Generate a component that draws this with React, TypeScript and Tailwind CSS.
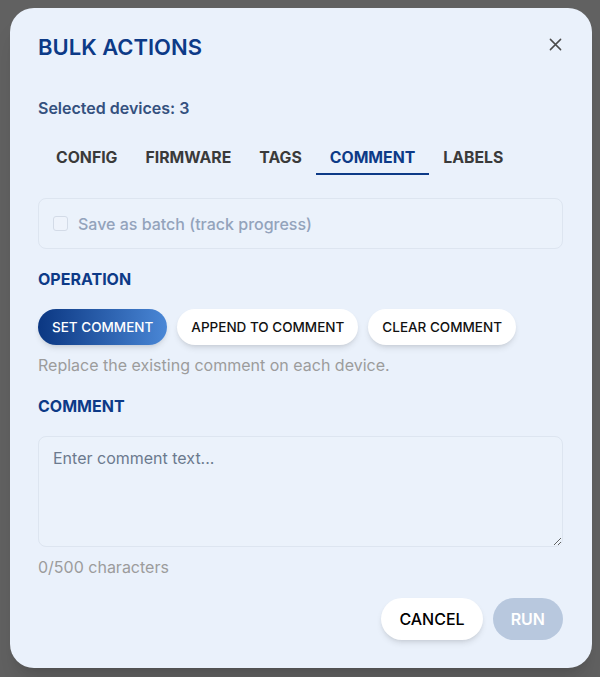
import React from "react";

export default function App() {
  const tabs = ["CONFIG", "FIRMWARE", "TAGS", "COMMENT", "LABELS"];
  return (
    <div
      className="relative h-[677px] w-[600px] overflow-hidden bg-[#616161] pl-[10px] pt-[8px]"
      style={{ fontFamily: "Inter, 'Noto Sans', sans-serif" }}
    >
      <div className="relative h-[660px] w-[582px] rounded-[24px] bg-[#eaf1fb] pl-[28px] pr-[29px] pt-[25px] shadow-xl">
        <button className="absolute right-[21px] top-[20px] flex h-[32px] w-[32px] items-center justify-center text-[#4a4a4a]">
          <svg width="13" height="13" viewBox="0 0 14 14" fill="none" stroke="currentColor" strokeWidth="1.6" strokeLinecap="round">
            <path d="M1.5 1.5L12.5 12.5M12.5 1.5L1.5 12.5" />
          </svg>
        </button>

        <h1 className="text-[22px] font-semibold leading-[28px] text-[#0d3a87]">BULK ACTIONS</h1>

        <div className="mt-[37px] text-[16px] font-semibold leading-[20px] text-[#34507e]">Selected devices: 3</div>

        <div className="ml-[4px] mt-[23px] flex">
          {tabs.map((t) => (
            <div
              key={t}
              className={
                t === "COMMENT"
                  ? "flex h-[34px] items-center border-b-2 border-[#0d3a87] px-[14px] pt-[1px] text-[15.8px] font-bold text-[#0d3a87]"
                  : "flex h-[34px] items-center border-b-2 border-transparent px-[14px] pt-[1px] text-[15.8px] font-bold text-[#3a3a3a]"
              }
            >
              {t}
            </div>
          ))}
        </div>

        <div className="mt-[23px] flex h-[51px] items-center gap-[10px] rounded-[8px] border border-[#dde5f0] bg-[#ebf2fb] px-[14px]">
          <div className="h-[15px] w-[15px] rounded-[3px] border border-[#d3dbe7] bg-[#eef3fb]" />
          <span className="text-[16px] font-medium text-[#93a3bb]">Save as batch (track progress)</span>
        </div>

        <div className="mt-[18px] text-[16px] font-bold leading-[24px] text-[#0d3a87]">OPERATION</div>

        <div className="mt-[18px] flex gap-[10px]">
          <button className="h-[36px] rounded-full bg-gradient-to-r from-[#0b3782] to-[#4a87d6] px-[14px] text-[13.5px] font-medium text-white shadow-md">
            SET COMMENT
          </button>
          <button className="h-[36px] rounded-full bg-white px-[14px] text-[13.5px] font-medium text-[#111] shadow-md">
            APPEND TO COMMENT
          </button>
          <button className="h-[36px] rounded-full bg-white px-[14px] text-[13.5px] font-medium text-[#111] shadow-md">
            CLEAR COMMENT
          </button>
        </div>

        <div className="mt-[8px] text-[16px] leading-[24px] text-[#9c9c9c]">Replace the existing comment on each device.</div>

        <div className="mt-[17px] text-[16px] font-bold leading-[24px] text-[#0d3a87]">COMMENT</div>

        <textarea
          className="mt-[18px] block h-[111px] w-full rounded-[8px] border border-[#dde5f0] bg-[#ebf2fb] px-[14px] py-[9px] text-[16px] leading-[24px] text-[#333] outline-none placeholder:text-[#6b7a8e]"
          placeholder="Enter comment text..."
        />

        <div className="mt-[10px] text-[16px] leading-[20px] text-[#9c9c9c]">0/500 characters</div>

        <div className="mt-[21px] flex justify-end gap-[10px]">
          <button className="h-[42px] rounded-full bg-white px-[18px] text-[16px] font-medium text-black shadow-md">
            CANCEL
          </button>
          <button className="h-[42px] rounded-full bg-[#b8c8de] px-[18px] text-[16px] font-semibold text-white">
            RUN
          </button>
        </div>
      </div>
    </div>
  );
}
